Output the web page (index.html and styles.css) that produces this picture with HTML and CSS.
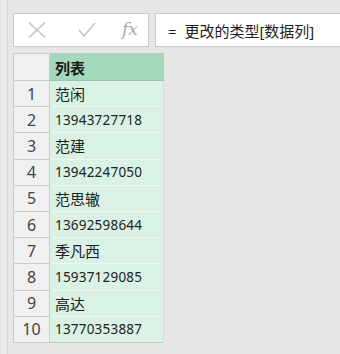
FILE: index.html
```html
<!DOCTYPE html>
<html lang="zh-CN">
<head>
  <meta charset="UTF-8">
  <meta name="viewport" content="width=device-width, initial-scale=1.0">
  <title>Power Query</title>
  <link rel="stylesheet" href="styles.css">
</head>
<body>

<div class="pane">
  <div class="formula-bar">
    <div class="buttons">
      <svg class="btn" width="20" height="16" viewBox="0 0 20 16">
        <path d="M2 0.5 L18 15.5 M18 0.5 L2 15.5" stroke="#c4c4c4" stroke-width="1.6" fill="none"/>
      </svg>
      <svg class="btn" width="20" height="16" viewBox="0 0 20 16">
        <path d="M2 8 L7 14 L18 1" stroke="#c4c4c4" stroke-width="1.6" fill="none"/>
      </svg>
      <span class="fx">fx</span>
    </div>
    <div class="formula">=&nbsp; 更改的类型[数据列]</div>
  </div>

  <table class="grid">
    <thead>
      <tr><th class="num"></th><th class="col">列表</th></tr>
    </thead>
    <tbody>
      <tr><td class="num">1</td><td class="cell">范闲</td></tr>
      <tr><td class="num">2</td><td class="cell digits">13943727718</td></tr>
      <tr><td class="num">3</td><td class="cell">范建</td></tr>
      <tr><td class="num">4</td><td class="cell digits">13942247050</td></tr>
      <tr><td class="num">5</td><td class="cell">范思辙</td></tr>
      <tr><td class="num">6</td><td class="cell digits">13692598644</td></tr>
      <tr><td class="num">7</td><td class="cell">季凡西</td></tr>
      <tr><td class="num">8</td><td class="cell digits">15937129085</td></tr>
      <tr><td class="num">9</td><td class="cell">高达</td></tr>
      <tr><td class="num">10</td><td class="cell digits">13770353887</td></tr>
    </tbody>
  </table>
</div>

</body>
</html>
```

FILE: styles.css
```css
html, body {
  margin: 0;
  height: 100%;
  background: #ebebeb;
  font-family: "Segoe UI", "Noto Sans", "Noto Sans CJK SC", sans-serif;
  color: #252525;
}
.pane {
  margin-left: 7px;
  min-height: 100%;
  box-sizing: border-box;
  border-left: 1px solid #d6d6d6;
  background: #e6e6e6;
  padding: 13px 0 0 5px;
}
.formula-bar {
  display: flex;
  gap: 6px;
  height: 34px;
}
.buttons {
  display: flex;
  align-items: center;
  width: 136px;
  box-sizing: border-box;
  border: 1px solid #c9c9c9;
  background: #fff;
  padding-left: 13px;
}
.btn {
  margin-right: 30px;
}
.btn + .btn {
  margin-right: 25px;
}
.fx {
  font-family: "DejaVu Serif", "Liberation Serif", serif;
  font-style: italic;
  font-size: 17px;
  color: #a8a8a8;
  margin-top: -2px;
}
.formula {
  flex: 1;
  display: flex;
  align-items: center;
  box-sizing: border-box;
  border: 1px solid #c9c9c9;
  border-right: none;
  background: #fff;
  padding-left: 12px;
  font-size: 15px;
  color: #1e1e1e;
}
.grid {
  margin-top: 6px;
  border-collapse: collapse;
  border: 1px solid #c4c4c4;
}
.grid th, .grid td {
  height: 25.2px;
  padding: 0;
  text-align: left;
}
.grid thead th {
  height: 26px;
}
.num {
  width: 35px;
  background: #f0f0f0;
  border: 1px solid #cbcbcb;
  text-align: center !important;
  font-size: 16px;
  font-weight: normal;
  color: #444;
}
.col {
  width: 108px;
  background: #a4d8bc;
  border-bottom: 1px solid #93c8ab;
  padding-left: 5px !important;
  font-size: 15px;
  font-weight: bold;
  color: #1a1a1a;
}
.cell {
  background: #d9f2e5;
  border-top: 1px solid #eef8f2;
  border-right: 1px solid #c6e6d5;
  padding-left: 5px !important;
  font-size: 15px;
  color: #222;
}
.digits {
  font-size: 13.5px;
  letter-spacing: 0.2px;
}
```
